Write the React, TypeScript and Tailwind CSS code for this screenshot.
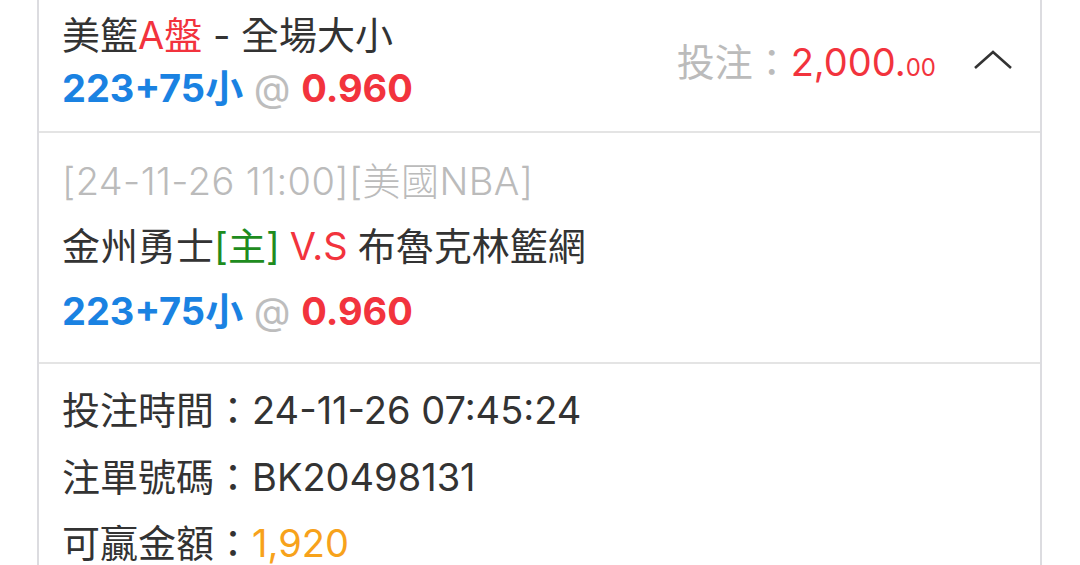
import { ReactNode } from "react";

const font = "font-['Inter','Noto_Sans_CJK_TC',sans-serif]";

const Odds = () => (
  <div className="font-bold text-[38px] leading-[53px] whitespace-nowrap">
    <span className="text-[#1a82e2]">223+75小</span>
    <span className="font-normal text-[#bdbdbd]"> @ </span>
    <span className="text-[#f2333d]">0.960</span>
  </div>
);

const InfoRow = ({ label, h, children }: { label: string; h: string; children: ReactNode }) => (
  <div className={`${h} flex items-center whitespace-nowrap`}>
    <span>{label}：</span>
    {children}
  </div>
);

export default function App() {
  return (
    <div className={`w-[1080px] h-[565px] bg-white overflow-hidden ${font} text-[#333333] text-[38px]`}>
      <div className="ml-[37px] mr-[38px] border-x-2 border-[#dcdce0]">
        {/* header */}
        <div className="flex items-center justify-between pl-[23px] pr-[27px] pt-[9px] pb-[16px] border-b-2 border-[#e4e4e4]">
          <div>
            <div className="leading-[53px] whitespace-nowrap">
              美籃<span className="text-[#f2333d]">A盤</span> - 全場大小
            </div>
            <Odds />
          </div>
          <div className="flex items-center">
            <span className="text-[#bbbbbb]">投注：</span>
            <span className="text-[#f2333d]">
              2,000.<span className="text-[24px]">00</span>
            </span>
            <svg width="40" height="20" viewBox="0 0 40 20" className="ml-[37px] mb-[4px]">
              <polyline points="2,18 20,2 38,18" fill="none" stroke="#333" strokeWidth="2.6" />
            </svg>
          </div>
        </div>

        {/* match */}
        <div className="pl-[23px] pt-[15px] pb-[18px] border-b-2 border-[#e4e4e4]">
          <div className="h-[66px] flex items-center font-light tracking-[0.4px] text-[#bbbbbb] whitespace-nowrap">
            [24-11-26 11:00][美國NBA]
          </div>
          <div className="h-[64px] flex items-center whitespace-nowrap">
            金州勇士<span className="text-[#1e8c1e]">[主]</span>
            <span className="text-[#f2333d] ml-[10px] mr-[10px]">V.S</span>
            布魯克林籃網
          </div>
          <div className="h-[66px] flex items-center">
            <Odds />
          </div>
        </div>

        {/* details */}
        <div className="pl-[23px] pt-[12px]">
          <InfoRow label="投注時間" h="h-[68px]">24-11-26 07:45:24</InfoRow>
          <InfoRow label="注單號碼" h="h-[66px]">BK20498131</InfoRow>
          <InfoRow label="可贏金額" h="h-[66px]">
            <span className="text-[#f7a21b]">1,920</span>
          </InfoRow>
        </div>
      </div>
    </div>
  );
}
